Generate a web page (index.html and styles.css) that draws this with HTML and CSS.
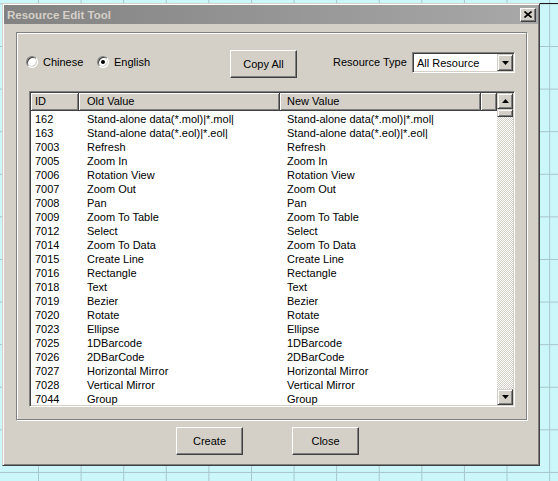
FILE: index.html
```html
<!DOCTYPE html>
<html lang="en">
<head>
  <meta charset="UTF-8">
  <title>Resource Edit Tool</title>
  <link rel="stylesheet" href="styles.css">
</head>
<body>
  <div class="dialog">
    <div class="titlebar">
      <span class="title">Resource Edit Tool</span>
      <span class="close-btn">
        <svg width="8" height="7" viewBox="0 0 8 7"><path d="M0.5 0.5 L7.5 6.5 M7.5 0.5 L0.5 6.5" stroke="#000" stroke-width="1.6" fill="none"/></svg>
      </span>
    </div>

    <div class="group">
      <!-- language + type selection -->
      <div class="toolbar">
        <label class="radio-item zh"><span class="radio"></span>Chinese</label>
        <label class="radio-item en"><span class="radio checked"></span>English</label>
        <button class="btn">Copy All</button>
        <span class="type-label">Resource Type</span>
        <div class="combo">
          <span class="combo-text">All Resource</span>
          <span class="combo-btn">
            <svg width="7" height="4" viewBox="0 0 7 4"><polygon points="0,0 7,0 3.5,4" fill="#000"/></svg>
          </span>
        </div>
      </div>

      <!-- resource list -->
      <div class="listbox">
        <div class="list-main">
          <div class="list-head">
            <div class="col c-id">ID</div>
            <div class="col c-old">Old Value</div>
            <div class="col c-new">New Value</div>
            <div class="col c-fill"></div>
          </div>
          <div class="list-body">
            <div class="row"><span class="c-id">162</span><span class="c-old">Stand-alone data(*.mol)|*.mol|</span><span class="c-new">Stand-alone data(*.mol)|*.mol|</span></div>
            <div class="row"><span class="c-id">163</span><span class="c-old">Stand-alone data(*.eol)|*.eol|</span><span class="c-new">Stand-alone data(*.eol)|*.eol|</span></div>
            <div class="row"><span class="c-id">7003</span><span class="c-old">Refresh</span><span class="c-new">Refresh</span></div>
            <div class="row"><span class="c-id">7005</span><span class="c-old">Zoom In</span><span class="c-new">Zoom In</span></div>
            <div class="row"><span class="c-id">7006</span><span class="c-old">Rotation View</span><span class="c-new">Rotation View</span></div>
            <div class="row"><span class="c-id">7007</span><span class="c-old">Zoom Out</span><span class="c-new">Zoom Out</span></div>
            <div class="row"><span class="c-id">7008</span><span class="c-old">Pan</span><span class="c-new">Pan</span></div>
            <div class="row"><span class="c-id">7009</span><span class="c-old">Zoom To Table</span><span class="c-new">Zoom To Table</span></div>
            <div class="row"><span class="c-id">7012</span><span class="c-old">Select</span><span class="c-new">Select</span></div>
            <div class="row"><span class="c-id">7014</span><span class="c-old">Zoom To Data</span><span class="c-new">Zoom To Data</span></div>
            <div class="row"><span class="c-id">7015</span><span class="c-old">Create Line</span><span class="c-new">Create Line</span></div>
            <div class="row"><span class="c-id">7016</span><span class="c-old">Rectangle</span><span class="c-new">Rectangle</span></div>
            <div class="row"><span class="c-id">7018</span><span class="c-old">Text</span><span class="c-new">Text</span></div>
            <div class="row"><span class="c-id">7019</span><span class="c-old">Bezier</span><span class="c-new">Bezier</span></div>
            <div class="row"><span class="c-id">7020</span><span class="c-old">Rotate</span><span class="c-new">Rotate</span></div>
            <div class="row"><span class="c-id">7023</span><span class="c-old">Ellipse</span><span class="c-new">Ellipse</span></div>
            <div class="row"><span class="c-id">7025</span><span class="c-old">1DBarcode</span><span class="c-new">1DBarcode</span></div>
            <div class="row"><span class="c-id">7026</span><span class="c-old">2DBarCode</span><span class="c-new">2DBarCode</span></div>
            <div class="row"><span class="c-id">7027</span><span class="c-old">Horizontal Mirror</span><span class="c-new">Horizontal Mirror</span></div>
            <div class="row"><span class="c-id">7028</span><span class="c-old">Vertical Mirror</span><span class="c-new">Vertical Mirror</span></div>
            <div class="row"><span class="c-id">7044</span><span class="c-old">Group</span><span class="c-new">Group</span></div>
          </div>
        </div>
        <div class="vscroll">
          <span class="sb-btn">
            <svg width="7" height="4" viewBox="0 0 7 4"><polygon points="0,4 7,4 3.5,0" fill="#000"/></svg>
          </span>
          <span class="sb-thumb"></span>
          <span class="sb-track"></span>
          <span class="sb-btn">
            <svg width="7" height="4" viewBox="0 0 7 4"><polygon points="0,0 7,0 3.5,4" fill="#000"/></svg>
          </span>
        </div>
      </div>
    </div>

    <div class="footer">
      <button class="btn">Create</button>
      <button class="btn">Close</button>
    </div>
  </div>
</body>
</html>
```

FILE: styles.css
```css
body {
  margin: 0;
  width: 558px;
  height: 481px;
  overflow: hidden;
  font-family: "Liberation Sans", Arial, sans-serif;
  font-size: 11px;
  color: #000;
  background-color: #cbf7fa;
  background-image:
    linear-gradient(#1a1a1a, #1a1a1a),
    linear-gradient(to right, #a9c6ca 1px, transparent 1px),
    linear-gradient(to bottom, #a9c6ca 1px, transparent 1px);
  background-repeat: no-repeat, repeat, repeat;
  background-size: 18px 1px, 42.6px 42.6px, 42.6px 42.6px;
  background-position: 540px 3px, 38px 0, 0 46px;
}

.dialog {
  margin: 3px 0 0 2px;
  width: 538px;
  height: 463px;
  box-sizing: border-box;
  padding: 1px;
  background: #d4d0c8;
  border: 1px solid;
  border-color: #d4d0c8 #404040 #404040 #d4d0c8;
  box-shadow: inset 1px 1px #fff, inset -1px -1px #808080;
  display: flex;
  flex-direction: column;
}

/* title bar */
.titlebar {
  height: 19px;
  display: flex;
  align-items: center;
  justify-content: space-between;
  background: linear-gradient(to right, #828282, #a8a8a8);
}

.title {
  padding-left: 3px;
  color: #d4d0c8;
  font-weight: bold;
  font-size: 11.5px;
}

.close-btn {
  width: 16px;
  height: 14px;
  margin-right: 2px;
  box-sizing: border-box;
  display: flex;
  align-items: center;
  justify-content: center;
  background: #d4d0c8;
  border: 1px solid;
  border-color: #fff #404040 #404040 #fff;
  box-shadow: inset -1px -1px #808080;
}

/* etched group box */
.group {
  margin: 8px 0 0 12px;
  width: 511px;
  height: 388px;
  box-sizing: border-box;
  padding-top: 17px;
  border: 1px solid #808080;
  box-shadow: inset 1px 1px #fff, 1px 1px #fff;
}

.toolbar {
  margin-left: 9px;
  width: 489px;
  height: 28px;
  display: flex;
  align-items: flex-start;
}

.radio-item {
  margin-top: 5px;
  height: 14px;
  display: flex;
  align-items: center;
  gap: 5px;
}

.radio-item.zh {
  width: 71px;
}

.radio-item.en {
  width: 133px;
}

.radio {
  position: relative;
  width: 12px;
  height: 12px;
  box-sizing: border-box;
  border-radius: 50%;
  background: #fff;
  border: 1px solid;
  border-color: #808080 #fff #fff #808080;
  box-shadow: inset 1px 1px 0 #404040, inset -1px -1px 0 #d4d0c8;
}

.radio.checked::after {
  content: '';
  position: absolute;
  left: 3px;
  top: 3px;
  width: 4px;
  height: 4px;
  border-radius: 50%;
  background: #000;
}

.btn {
  width: 67px;
  height: 28px;
  box-sizing: border-box;
  padding: 0;
  font: inherit;
  color: #000;
  background: #d4d0c8;
  border: 1px solid;
  border-color: #fff #404040 #404040 #fff;
  box-shadow: inset -1px -1px #808080;
}

.type-label {
  margin: 6px 0 0 36px;
}

.combo {
  margin: 2px 0 0 auto;
  width: 103px;
  height: 21px;
  box-sizing: border-box;
  padding: 1px;
  display: flex;
  align-items: center;
  background: #fff;
  border: 1px solid;
  border-color: #808080 #fff #fff #808080;
  box-shadow: inset 1px 1px #404040, inset -1px -1px #d4d0c8;
}

.combo-text {
  flex: 1;
  padding-left: 3px;
}

.combo-btn {
  width: 16px;
  height: 17px;
  box-sizing: border-box;
  display: flex;
  align-items: center;
  justify-content: center;
  background: #d4d0c8;
  border: 1px solid;
  border-color: #d4d0c8 #404040 #404040 #d4d0c8;
  box-shadow: inset 1px 1px #fff, inset -1px -1px #808080;
}

/* list view */
.listbox {
  margin: 13px 0 0 12px;
  width: 486px;
  height: 316px;
  box-sizing: border-box;
  padding: 1px;
  display: flex;
  overflow: hidden;
  background: #fff;
  border: 1px solid;
  border-color: #808080 #fff #fff #808080;
  box-shadow: inset 1px 1px #404040, inset -1px -1px #d4d0c8;
}

.list-main {
  flex: 1;
  overflow: hidden;
}

.list-head {
  display: flex;
  height: 18px;
}

.list-head .col {
  height: 18px;
  box-sizing: border-box;
  line-height: 16px;
  background: #d4d0c8;
  border-right: 1px solid #404040;
  border-bottom: 1px solid #404040;
  box-shadow: inset 1px 1px #fff, inset -1px -1px #808080;
}

.list-body {
  padding-top: 1px;
}

.row {
  display: flex;
  height: 14px;
  line-height: 14px;
  white-space: nowrap;
}

.c-id {
  width: 48px;
  padding-left: 4px;
  box-sizing: border-box;
}

.c-old {
  width: 201px;
  padding-left: 8px;
  box-sizing: border-box;
}

.c-new {
  width: 201px;
  padding-left: 7px;
  box-sizing: border-box;
}

.c-fill {
  width: 16px;
}

.vscroll {
  width: 16px;
  display: flex;
  flex-direction: column;
}

.sb-btn,
.sb-thumb {
  box-sizing: border-box;
  background: #d4d0c8;
  border: 1px solid;
  border-color: #d4d0c8 #404040 #404040 #d4d0c8;
  box-shadow: inset 1px 1px #fff, inset -1px -1px #808080;
}

.sb-btn {
  height: 16px;
  display: flex;
  align-items: center;
  justify-content: center;
}

.sb-thumb {
  height: 8px;
}

.sb-track {
  flex: 1;
  background-image: conic-gradient(#d4d0c8 25%, #fff 0 50%, #d4d0c8 0 75%, #fff 0);
  background-size: 2px 2px;
}

.footer {
  display: flex;
  gap: 49px;
  margin-top: 7px;
  padding-left: 172px;
}
```
